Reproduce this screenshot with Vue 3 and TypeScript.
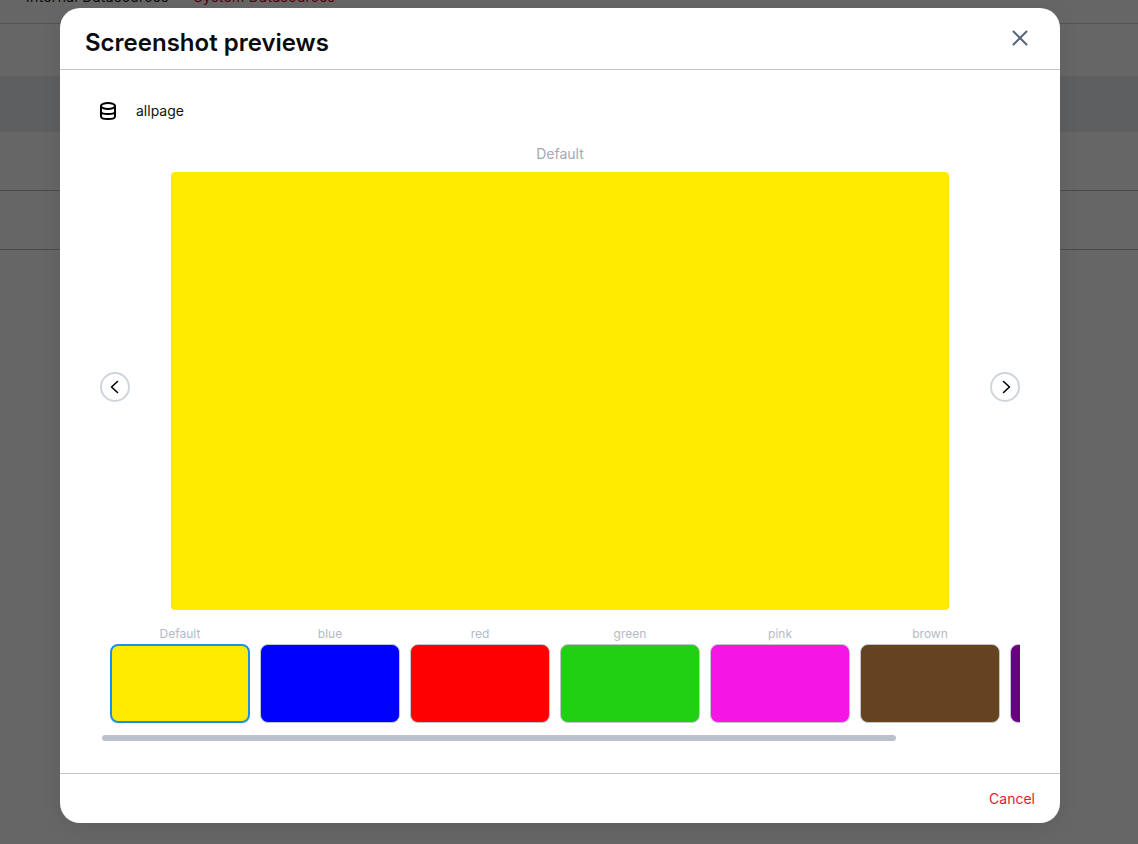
<script setup lang="ts">
interface Shot { name: string; color: string }
const shots: Shot[] = [
  { name: 'Default', color: '#ffeb00' },
  { name: 'blue', color: '#0000ff' },
  { name: 'red', color: '#ff0000' },
  { name: 'green', color: '#22d013' },
  { name: 'pink', color: '#f516e6' },
  { name: 'brown', color: '#654321' },
  { name: '', color: '#6a0080' },
]
</script>

<template>
  <div class="page">
    <div class="tabs">
      <span class="tab">Internal Datasources</span>
      <span class="tab active">System Datasources</span>
    </div>
    <div class="row r1"></div>
    <div class="row r2"></div>
    <div class="row r3"></div>
    <div class="row r4"></div>
    <div class="overlay">
      <div class="modal">
        <header class="head">
          <h2>Screenshot previews</h2>
          <svg class="close" width="24" height="24" viewBox="0 0 24 24" fill="none" stroke="#5a6579" stroke-width="2" stroke-linecap="round"><path d="M5.5 5.5l13 13M18.500 5.5l-13 13" /></svg>
        </header>
        <div class="body">
          <div class="source">
            <svg width="24" height="24" viewBox="0 0 24 24" fill="none" stroke="#000" stroke-width="2" stroke-linecap="round" stroke-linejoin="round"><ellipse cx="12" cy="7" rx="7" ry="3" /><path d="M5 7v10.500c0 1.500 3.100 2.500 7 2.500s7-1 7-2.500V7" /><path d="M5 12.500c0 1.500 3.100 2.500 7 2.500s7-1 7-2.500" /></svg>
            <span class="source-name">allpage</span>
          </div>
          <div class="caption">Default</div>
          <div class="viewer">
            <button class="nav"><svg width="16" height="16" viewBox="0 0 16 16" fill="none" stroke="#000" stroke-width="1.600" stroke-linecap="round" stroke-linejoin="round"><path d="M10.500 2.500L4.500 8l6 5.500" /></svg></button>
            <div class="preview"></div>
            <button class="nav"><svg width="16" height="16" viewBox="0 0 16 16" fill="none" stroke="#000" stroke-width="1.600" stroke-linecap="round" stroke-linejoin="round"><path d="M6.500 2.500l6 5.500-6 5.500" /></svg></button>
          </div>
          <div class="strip">
            <div v-for="(s, i) in shots" :key="s.color" class="thumb">
              <div class="thumb-name">{{ s.name }}</div>
              <div class="thumb-box" :class="{ selected: i === 0 }" :style="{ background: s.color }"></div>
            </div>
          </div>
          <div class="bar"></div>
        </div>
        <footer class="foot"><span class="cancel">Cancel</span></footer>
      </div>
    </div>
  </div>
</template>

<style>
html, body { margin: 0; height: 100%; overflow: hidden; }
</style>

<style scoped>
.page { position: relative; width: 1138px; height: 844px; overflow: hidden; background: #fff; font-family: Inter, "Liberation Sans", sans-serif; }
.tabs { height: 23px; display: flex; gap: 25px; padding-left: 26px; align-items: flex-start; border-bottom: 1px solid #ccc; font-size: 14px; letter-spacing: 0.3px; line-height: 20px; overflow: hidden; }
.tab { color: #222; white-space: nowrap; margin-top: -13px; }
.tab.active { color: #e2001a; }
.row { border-bottom: 1px solid #bbb; box-sizing: border-box; }
.r1 { height: 52px; border-bottom: 0; }
.r2 { height: 56px; background: #eceef2; border-bottom: 0; }
.r3 { height: 59px; }
.r4 { height: 59px; }
.overlay { position: absolute; inset: 0; background: rgba(0, 0, 0, 0.6); }
.modal { position: absolute; left: 60px; top: 8px; width: 1000px; height: 815px; background: #fff; border-radius: 20px; display: flex; flex-direction: column; box-shadow: 0 4px 20px rgba(0, 0, 0, 0.08); overflow: hidden; }
.head { height: 62px; flex: none; box-sizing: border-box; border-bottom: 1px solid #c4c6cf; padding: 8px 0 0 25px; display: flex; align-items: center; position: relative; }
h2 { margin: 0; font-size: 24px; font-weight: 600; color: #0b0b0f; line-height: 32px; }
.close { position: absolute; left: 948px; top: 18px; }
.body { flex: 1; padding: 0 40px; display: flex; flex-direction: column; min-height: 0; }
.source { display: flex; align-items: center; gap: 16px; height: 24px; margin-top: 29px; font-size: 14px; color: #111; margin-left: -4px; }
.source-name { line-height: 20px; margin-top: -1px; }
.caption { text-align: center; font-size: 14px; line-height: 20px; color: #a3a9b8; margin-top: 21px; height: 28px; }
.viewer { display: flex; align-items: center; justify-content: space-between; }
.preview { width: 778px; height: 438px; background: #ffeb00; border-radius: 4px; }
.nav { width: 30px; height: 30px; padding: 0; margin-bottom: 8px; box-sizing: border-box; border-radius: 50%; border: 2px solid #d0d5dd; background: #fff; display: flex; align-items: center; justify-content: center; }
.strip { display: flex; gap: 10px; margin: 16px 0 0 10px; width: 910px; overflow: hidden; flex: none; }
.thumb { flex: none; width: 140px; }
.thumb-name { font-size: 12px; line-height: 16px; height: 18px; text-align: center; color: #b4bac7; }
.thumb-box { width: 140px; height: 79px; box-sizing: border-box; border: 1px solid #c4c6cf; border-radius: 8px; }
.thumb-box.selected { border: 2px solid #1c8fe8; }
.bar { width: 794px; height: 6px; border-radius: 3px; background: #bbc1cc; margin: 12px 0 0 2px; flex: none; }
.foot { height: 50px; flex: none; box-sizing: border-box; border-top: 1px solid #c4c6cf; display: flex; align-items: center; justify-content: flex-end; padding-right: 25px; }
.cancel { font-size: 14px; color: #dc1c2e; }
</style>
